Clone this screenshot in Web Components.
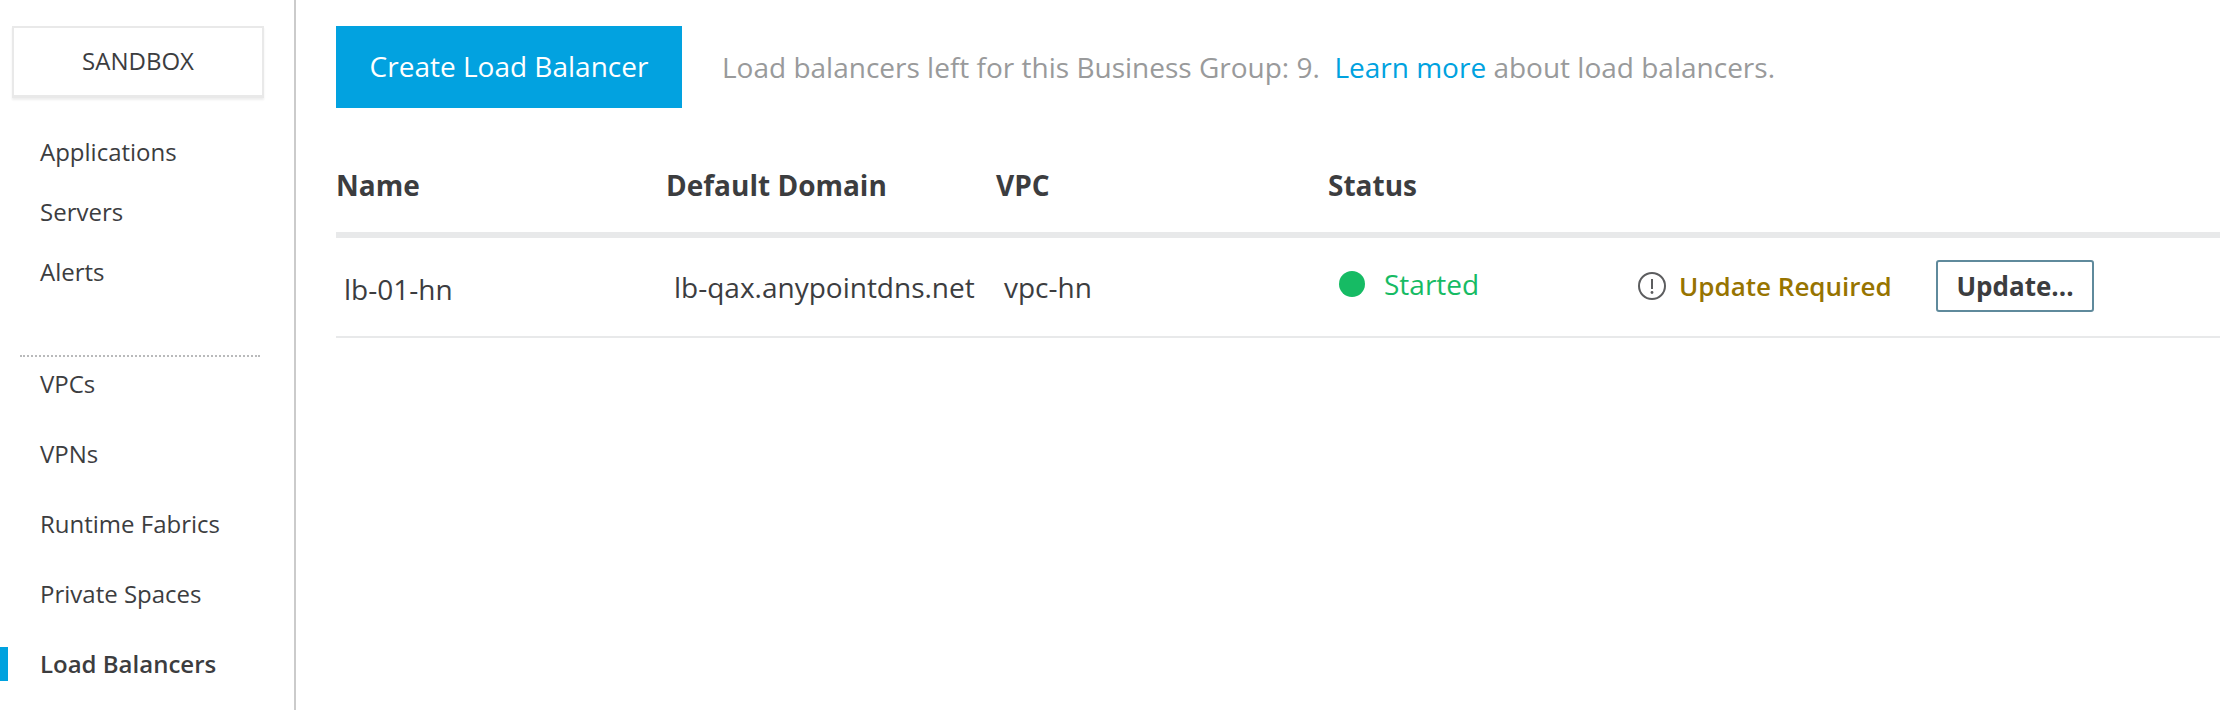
<!DOCTYPE html>
<html>
<head>
<meta charset="utf-8">
<style>
html, body { margin: 0; height: 100%; background: #fff; }
body { font-family: "Open Sans", "Noto Sans", sans-serif; color: #3c3d3f; overflow: hidden; }
</style>
</head>
<body>
<lb-page>
  <env-nav slot="nav">
    <env-box slot="env">SANDBOX</env-box>
    <nav-item slot="top">Applications</nav-item>
    <nav-item slot="top">Servers</nav-item>
    <nav-item slot="top">Alerts</nav-item>
    <nav-item>VPCs</nav-item>
    <nav-item>VPNs</nav-item>
    <nav-item>Runtime Fabrics</nav-item>
    <nav-item>Private Spaces</nav-item>
    <nav-item active>Load Balancers</nav-item>
  </env-nav>
  <lb-toolbar>
    <span slot="action">Create Load Balancer</span>
    <span>Load balancers left for this Business Group: 9.&nbsp; <lb-link>Learn more</lb-link> about load balancers.</span>
  </lb-toolbar>
  <lb-table>
    <lb-row name="lb-01-hn" domain="lb-qax.anypointdns.net" vpc="vpc-hn"></lb-row>
  </lb-table>
</lb-page>

<script>
// small helper, every element just gets its markup in an open shadow root
function shadow(el, html) {
    el.attachShadow({mode: 'open'}).innerHTML = html
}

class LbPage extends HTMLElement {
    constructor() {
        super()
        shadow(this, `<style>
            :host { display: flex; height: 710px; }
            main { flex: 1; min-width: 0; padding: 26px 0 0 40px; }
        </style>
        <slot name="nav"></slot>
        <main><slot></slot></main>`)
    }
}
customElements.define('lb-page', LbPage)

class EnvNav extends HTMLElement {
    constructor() {
        super()
        shadow(this, `<style>
            :host { display: block; box-sizing: border-box; width: 296px; flex: none; height: 710px; border-right: 2px solid #cbcbcb; padding-top: 26px; }
            .top { display: flex; flex-direction: column; gap: 28px; margin-top: 38px; }
            hr { border: 0; border-top: 2px dotted #b9babb; margin: 67px 0 0 20px; width: 240px; height: 0; }
            .bottom { display: flex; flex-direction: column; gap: 38px; margin-top: 11px; }
        </style>
        <slot name="env"></slot>
        <div class="top"><slot name="top"></slot></div>
        <hr>
        <div class="bottom"><slot></slot></div>`)
    }
}
customElements.define('env-nav', EnvNav)

class EnvBox extends HTMLElement {
    constructor() {
        super()
        shadow(this, `<style>
            :host { display: flex; box-sizing: border-box; width: 252px; height: 72px; margin-left: 12px; align-items: center; justify-content: center; border: 2px solid #e9e9e9; border-bottom-width: 3px; box-shadow: 0 2px 2px #eee; font-size: 24px; padding-bottom: 3px; }
        </style><slot></slot>`)
    }
}
customElements.define('env-box', EnvBox)

class NavItem extends HTMLElement {
    constructor() {
        super()
        shadow(this, `<style>
            :host { display: block; position: relative; height: 32px; line-height: 32px; padding-left: 40px; font-size: 24px; white-space: nowrap; }
            :host([active]) { font-weight: 600; }
            :host([active])::before { content: ""; position: absolute; left: 0; top: -1px; width: 8px; height: 34px; background: #00a2df; }
        </style><slot></slot>`)
    }
}
customElements.define('nav-item', NavItem)

class LbToolbar extends HTMLElement {
    constructor() {
        super()
        shadow(this, `<style>
            :host { display: flex; align-items: center; height: 82px; font-size: 28px; color: #999a9b; white-space: nowrap; }
            .btn { display: flex; align-items: center; justify-content: center; width: 346px; height: 82px; background: #02a2e0; color: #fff; margin-right: 40px; padding-bottom: 2px; box-sizing: border-box; }
        </style>
        <div class="btn"><slot name="action"></slot></div>
        <div><slot></slot></div>`)
    }
}
customElements.define('lb-toolbar', LbToolbar)

class LbLink extends HTMLElement {
    constructor() {
        super()
        shadow(this, `<style>:host { display: inline; color: #00a2df; }</style><slot></slot>`)
    }
}
customElements.define('lb-link', LbLink)

class LbTable extends HTMLElement {
    constructor() {
        super()
        shadow(this, `<style>
            :host { display: block; margin-top: 42px; }
            .head { display: flex; align-items: center; box-sizing: border-box; height: 88px; padding-bottom: 12px; border-bottom: 6px solid #e8e9ea; font-weight: 700; font-size: 28px; }
            .head div:nth-child(1) { width: 330px; }
            .head div:nth-child(2) { width: 330px; }
            .head div:nth-child(3) { width: 332px; }
        </style>
        <div class="head"><div>Name</div><div>Default Domain</div><div>VPC</div><div>Status</div></div>
        <slot></slot>`)
    }
}
customElements.define('lb-table', LbTable)

class LbRow extends HTMLElement {
    constructor() {
        super()
        shadow(this, `<style>
            :host { display: flex; align-items: center; height: 98px; border-bottom: 2px solid #e8e9ea; font-size: 28px; white-space: nowrap; }
            .name { width: 331px; padding-left: 8px; box-sizing: border-box; padding-top: 4px; }
            .domain { width: 329px; padding-left: 7px; box-sizing: border-box; }
            .vpc { width: 332px; padding-left: 8px; box-sizing: border-box; }
            .status { display: flex; align-items: center; width: 310px; color: #16bb64; padding-left: 11px; box-sizing: border-box; padding-bottom: 6px; }
            .dot { width: 26px; height: 26px; border-radius: 50%; background: #16bb64; margin-right: 19px; }
            .warn { display: flex; align-items: center; width: 298px; color: #977400; font-weight: 600; font-size: 26px; margin-bottom: 2px; }
            .warn svg { margin-right: 13px; }
            .update { box-sizing: border-box; display: flex; align-items: center; justify-content: center; width: 158px; height: 52px; border: 2px solid #5f8a9c; border-radius: 3px; font-weight: 700; font-size: 26px; margin-bottom: 3px; }
        </style>
        <div class="name">${this.getAttribute('name')}</div>
        <div class="domain">${this.getAttribute('domain')}</div>
        <div class="vpc">${this.getAttribute('vpc')}</div>
        <div class="status"><span class="dot"></span>Started</div>
        <div class="warn">
            <svg width="28" height="28" viewBox="0 0 28 28"><circle cx="14" cy="14" r="13" fill="none" stroke="#5c5d5f" stroke-width="2"/><path d="M14 7v10" stroke="#5c5d5f" stroke-width="2" fill="none"/><circle cx="14" cy="20.5" r="1.4" fill="#5c5d5f"/></svg>
            Update Required
        </div>
        <div class="update">Update...</div>`)
    }
}
customElements.define('lb-row', LbRow)
</script>
</body>
</html>
